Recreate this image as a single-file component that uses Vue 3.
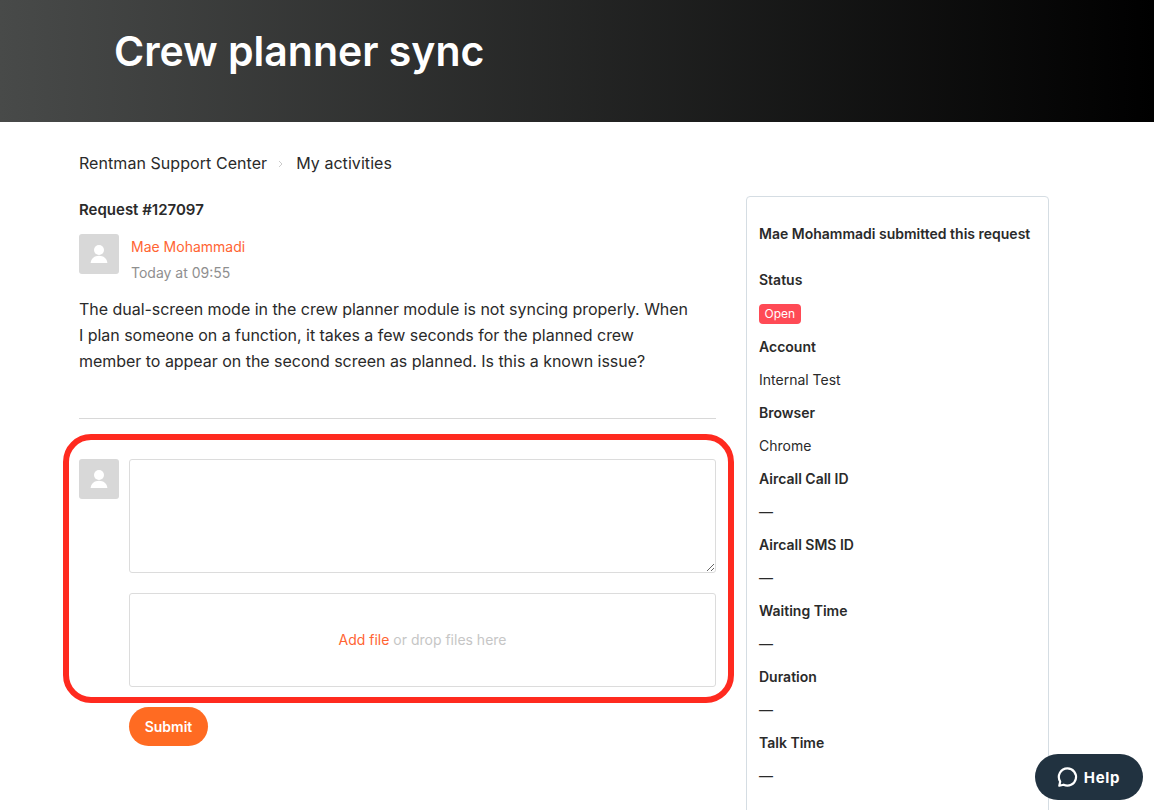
<script setup>
const details = [
  { label: 'Account', value: 'Internal Test' },
  { label: 'Browser', value: 'Chrome' },
  { label: 'Aircall Call ID', value: '—' },
  { label: 'Aircall SMS ID', value: '—' },
  { label: 'Waiting Time', value: '—' },
  { label: 'Duration', value: '—' },
  { label: 'Talk Time', value: '—' },
]
</script>

<template>
  <div class="page">
    <header class="hero"><h1>Crew planner sync</h1></header>
    <div class="content">
      <nav class="crumbs">
        <span>Rentman Support Center</span>
        <svg class="chev" width="5" height="8" viewBox="0 0 5 8"><path d="M1 1l3 3-3 3" fill="none" stroke="#ccc" stroke-width="1"/></svg>
        <span>My activities</span>
      </nav>
      <div class="columns">
        <main class="main">
          <h2>Request #127097</h2>
          <div class="author">
            <div class="avatar">
              <svg width="20" height="20" viewBox="0 0 20 20"><circle cx="10" cy="6" r="5" fill="#fff"/><path d="M1.6 19C2 14.6 5.5 11.8 10 11.8s8 2.8 8.4 7.2z" fill="#fff"/></svg>
            </div>
            <div class="meta">
              <a class="name">Mae Mohammadi</a>
              <span class="time">Today at 09:55</span>
            </div>
          </div>
          <p class="body">The dual-screen mode in the crew planner module is not syncing properly. When I plan someone on a function, it takes a few seconds for the planned crew member to appear on the second screen as planned. Is this a known issue?</p>
          <hr class="rule" />
          <div class="reply">
            <div class="avatar">
              <svg width="20" height="20" viewBox="0 0 20 20"><circle cx="10" cy="6" r="5" fill="#fff"/><path d="M1.6 19C2 14.6 5.5 11.8 10 11.8s8 2.8 8.4 7.2z" fill="#fff"/></svg>
            </div>
            <div class="reply-fields">
              <textarea class="input"></textarea>
              <div class="drop"><a class="add">Add file</a>&nbsp;or drop files here</div>
              <button class="submit">Submit</button>
            </div>
            <div class="highlight"></div>
          </div>
        </main>
        <aside class="side">
          <div class="side-title">Mae Mohammadi submitted this request</div>
          <div class="row strong">Status</div>
          <div class="row badge-row"><span class="badge">Open</span></div>
          <template v-for="d in details" :key="d.label">
            <div class="row strong">{{ d.label }}</div>
            <div class="row">{{ d.value }}</div>
          </template>
        </aside>
      </div>
    </div>
    <button class="help">
      <svg width="22" height="22" viewBox="0 0 22 22"><path d="M11.5 2.4a8.6 8.6 0 1 1-3.9 16.3l-4.3 1 .9-4.1A8.6 8.6 0 0 1 11.5 2.4z" fill="none" stroke="#fff" stroke-width="2.2" stroke-linejoin="round"/></svg>
      <span>Help</span>
    </button>
  </div>
</template>

<style scoped>
.page {
  position: relative;
  height: 810px;
  overflow: hidden;
  background: #fff;
  color: #2a2a2a;
  font-family: Inter, "Liberation Sans", sans-serif;
  font-size: 14px;
}
.hero {
  height: 122px;
  box-sizing: border-box;
  padding: 21px 0 0 114px;
  background: linear-gradient(90deg, #484a49 0%, #000 100%);
}
.hero h1 {
  margin: 0;
  color: #fff;
  font-size: 41px;
  line-height: 60px;
  font-weight: 600;
}
.content { padding: 0 105px 0 79px; }
.crumbs {
  display: flex;
  align-items: center;
  height: 20px;
  margin-top: 31px;
  font-size: 16px;
  letter-spacing: 0.06px;
}
.chev { margin: 2px 13px 0 11px; }
.columns {
  display: flex;
  gap: 30px;
  margin-top: 23px;
  align-items: flex-start;
}
.main { width: 637px; flex: none; }
h2 {
  margin: 0;
  padding-top: 4px;
  font-size: 15px;
  line-height: 20px;
  font-weight: 600;
}
.author { display: flex; gap: 12px; margin-top: 14px; }
.avatar {
  width: 40px;
  height: 40px;
  flex: none;
  display: flex;
  align-items: center;
  justify-content: center;
  border-radius: 3px;
  background: #d8d8d8;
}
.meta { display: flex; flex-direction: column; gap: 9px; line-height: 17px; margin-top: 4px; }
.name { color: #ff6433; font-size: 14px; }
.time { color: #8f8f8f; font-size: 14px; }
.body {
  margin: 15px 0 0;
  width: 615px;
  font-size: 16px;
  line-height: 26px;
  letter-spacing: -0.03px;
}
.rule {
  margin: 44px 0 0;
  border: 0;
  border-top: 1px solid #d8d8d8;
}
.reply {
  position: relative;
  display: flex;
  gap: 10px;
  margin-top: 40px;
}
.reply-fields { flex: 1; display: flex; flex-direction: column; align-items: flex-start; }
.input {
  display: block;
  width: 100%;
  height: 114px;
  box-sizing: border-box;
  margin: 0;
  border: 1px solid #dcdcdc;
  border-radius: 3px;
  background: #fff;
  outline: none;
}
.drop {
  width: 100%;
  height: 94px;
  box-sizing: border-box;
  margin-top: 20px;
  padding-bottom: 2px;
  display: flex;
  align-items: center;
  justify-content: center;
  border: 1px solid #dcdcdc;
  border-radius: 3px;
  color: #c6c6c6;
  font-size: 14px;
}
.add { color: #ff6433; }
.submit {
  margin-top: 20px;
  width: 79px;
  height: 39px;
  border: 0;
  border-radius: 20px;
  background: #ff6b22;
  color: #fff;
  font: 600 14px Inter, sans-serif;
}
.highlight {
  position: absolute;
  left: -16px;
  top: -25px;
  width: 671px;
  height: 269px;
  box-sizing: border-box;
  border: 6px solid #ff2a1f;
  border-radius: 28px;
  pointer-events: none;
}
.side {
  width: 303px;
  flex: none;
  box-sizing: border-box;
  height: 640px;
  padding: 24px 12px 0;
  border: 1px solid #d5dde3;
  border-radius: 4px;
}
.side-title {
  font-size: 14px;
  line-height: 26px;
  font-weight: 600;
  margin-bottom: 16px;
}
.row {
  height: 33px;
  display: flex;
  align-items: center;
  font-size: 14px;
}
.badge-row { margin-top: 1px; }
.strong { font-weight: 600; }
.badge {
  padding: 0 5.5px;
  height: 20px;
  line-height: 20px;
  border-radius: 4px;
  background: #ff4a55;
  color: #fff;
  font-size: 12px;
}
.help {
  position: absolute;
  left: 1035px;
  top: 754px;
  width: 108px;
  height: 46px;
  display: flex;
  align-items: center;
  justify-content: center;
  gap: 6px;
  padding: 0 2px 0 0;
  border: 0;
  border-radius: 23px;
  background: #213240;
  color: #fff;
  font: 700 15px Inter, sans-serif;
  letter-spacing: 0.7px;
}
</style>
